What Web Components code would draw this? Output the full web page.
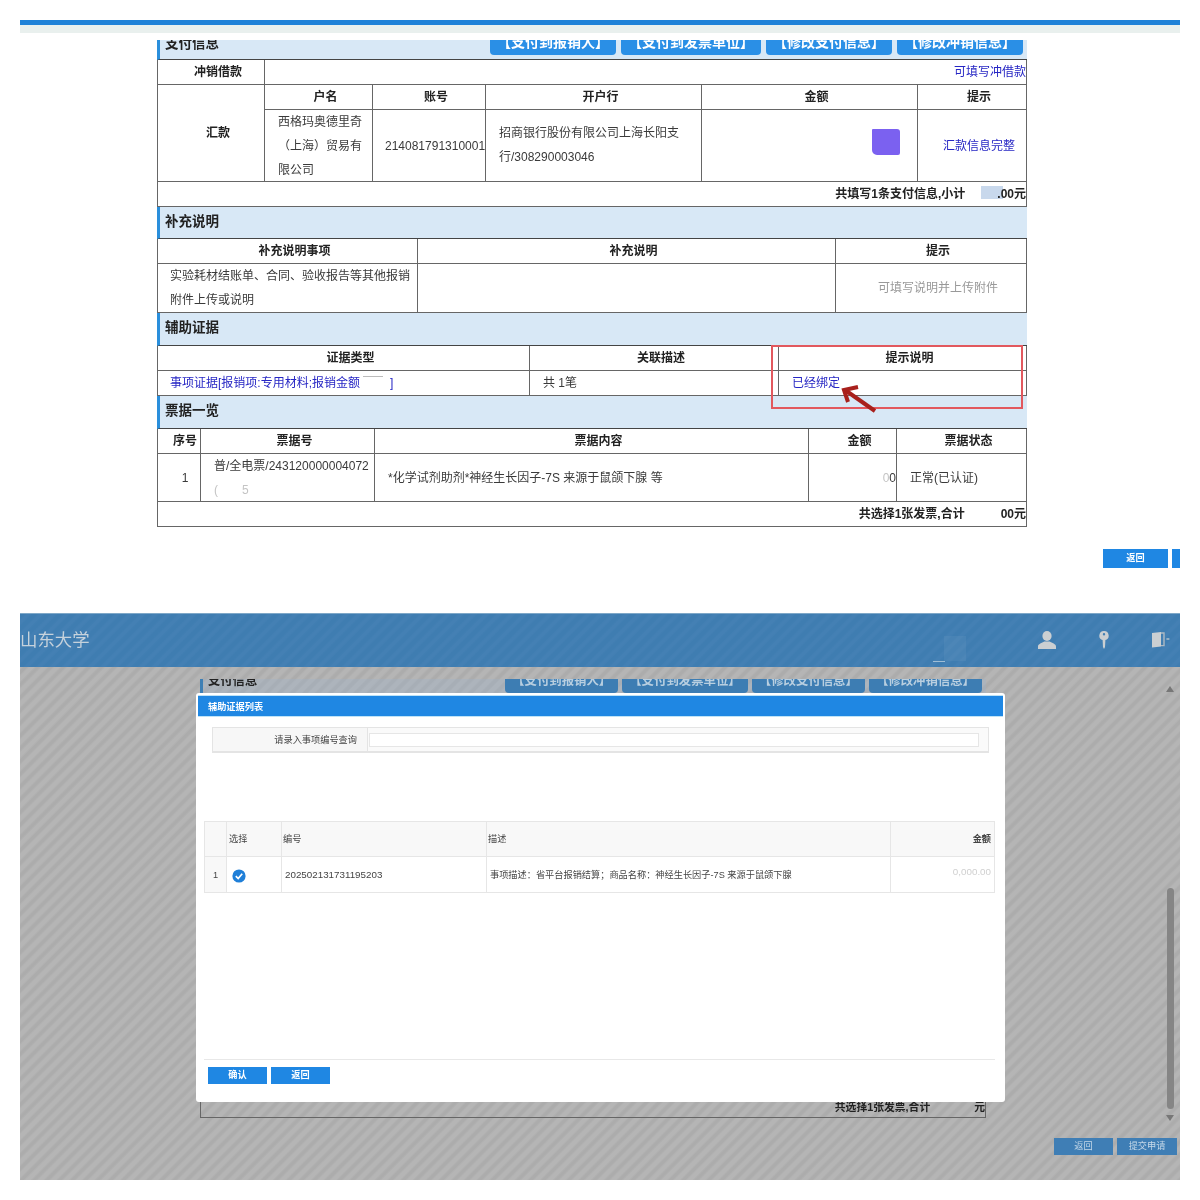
<!DOCTYPE html>
<html lang="zh-CN">
<head>
<meta charset="utf-8">
<title>辅助证据</title>
<style>
    html, body { margin: 0; background: #fff; }
    body {
        padding: 20px 20px 20px;
        font: 12px/24px "Liberation Sans", "Noto Sans CJK SC", sans-serif;
        color: #3a3a3a;
    }
</style>
</head>
<body>

<top-shot>
    <pay-form>
        <doc-section slot="head" clip="13" style="--h:33px">
            支付信息
            <tab-btn slot="tabs">【支付到报销人】</tab-btn>
            <tab-btn slot="tabs">【支付到发票单位】</tab-btn>
            <tab-btn slot="tabs">【修改支付信息】</tab-btn>
            <tab-btn slot="tabs">【修改冲销信息】</tab-btn>
        </doc-section>

        <doc-grid style="--cols:107px 108px 113px 216px 216px 109px;--rows:25px 25px 72px 25px">
            <doc-cell head>冲销借款</doc-cell>
            <doc-cell span="5" align="right" pad="0" tone="link">可填写冲借款</doc-cell>
            <doc-cell head rows="2">汇款</doc-cell>
            <doc-cell head>户名</doc-cell>
            <doc-cell head>账号</doc-cell>
            <doc-cell head>开户行</doc-cell>
            <doc-cell head>金额</doc-cell>
            <doc-cell head>提示</doc-cell>
            <doc-cell pad="0 10px 0 13px">西格玛奥德里奇（上海）贸易有限公司</doc-cell>
            <doc-cell pad="0 0 0 12px">214081791310001</doc-cell>
            <doc-cell pad="0 13px 2px">招商银行股份有限公司上海长阳支行/308290003046</doc-cell>
            <doc-cell align="right" pad="0 17px 0 0"><mask-blob kind="purple"></mask-blob></doc-cell>
            <doc-cell align="center" tone="link">汇款信息完整</doc-cell>
            <doc-cell span="6" align="right" pad="0" weight="bold">共填写1条支付信息,小计<mask-blob kind="pale"></mask-blob>.00元</doc-cell>
        </doc-grid>

        <doc-section style="--h:32px">补充说明</doc-section>
        <doc-grid style="--cols:260px 418px 191px;--rows:25px 49px">
            <doc-cell head>补充说明事项</doc-cell>
            <doc-cell head>补充说明</doc-cell>
            <doc-cell head>提示</doc-cell>
            <doc-cell pad="0 4px 0 12px">实验耗材结账单、合同、验收报告等其他报销附件上传或说明</doc-cell>
            <doc-cell></doc-cell>
            <doc-cell align="center" tone="muted">可填写说明并上传附件</doc-cell>
        </doc-grid>

        <doc-section>辅助证据</doc-section>
        <doc-grid style="--cols:372px 249px 248px;--rows:25px 25px">
            <doc-cell head>证据类型</doc-cell>
            <doc-cell head>关联描述</doc-cell>
            <doc-cell head>提示说明</doc-cell>
            <doc-cell pad="0 0 0 12px" tone="link">事项证据[报销项:专用材料;报销金额<mask-blob kind="gap"></mask-blob>]</doc-cell>
            <doc-cell pad="0 0 0 13px">共 1笔</doc-cell>
            <doc-cell pad="0 0 0 13px" tone="link">已经绑定</doc-cell>
        </doc-grid>

        <doc-section>票据一览</doc-section>
        <doc-grid style="--cols:43px 174px 434px 88px 130px;--rows:25px 48px 25px">
            <doc-cell head pad="0 2px 0 14px">序号</doc-cell>
            <doc-cell head>票据号</doc-cell>
            <doc-cell head>票据内容</doc-cell>
            <doc-cell head>金额</doc-cell>
            <doc-cell head>票据状态</doc-cell>
            <doc-cell align="center" pad="0 2px 0 14px">1</doc-cell>
            <doc-cell pad="0 0 0 13px">普/全电票/243120000004072<br><mask-blob kind="ghost">(　　5</mask-blob></doc-cell>
            <doc-cell pad="0 0 0 13px">*化学试剂助剂*神经生长因子-7S 来源于鼠颌下腺 等</doc-cell>
            <doc-cell align="right" pad="0"><mask-blob kind="ghost">0</mask-blob>0</doc-cell>
            <doc-cell pad="0 0 0 13px">正常(已认证)</doc-cell>
            <doc-cell span="5" align="right" pad="0" weight="bold">共选择1张发票,合计<mask-blob kind="blank"></mask-blob>00元</doc-cell>
        </doc-grid>
    </pay-form>
    <app-btn slot="actions" style="--w:65px;--ht:19px">返回</app-btn>
    <app-btn slot="actions" style="--w:60px;--ht:19px">提交申请</app-btn>
</top-shot>

<bottom-shot>
    <evidence-modal slot="modal"></evidence-modal>
</bottom-shot>

<script>
class TopShot extends HTMLElement {
    constructor() {
        super();
        this.shadowDOM = this.attachShadow({mode: "open"});
    }

    connectedCallback() {
        this.shadowDOM.innerHTML = `
            <style>
                :host { display: block; height: 593px; overflow: hidden; filter: blur(.35px); }
                .bar { height: 5px; background: #1f82d8; }
                .sub { height: 8px; background: #e9f0ee; }
                .form { margin: 7px 0 0 137px; }
                .actions { display: flex; gap: 4px; margin: 22px 0 0 1083px; }
            </style>
            <div class="bar"></div>
            <div class="sub"></div>
            <div class="form"><slot></slot></div>
            <div class="actions"><slot name="actions"></slot></div>`;
    }
}

class PayForm extends HTMLElement {
    constructor() {
        super();
        this.shadowDOM = this.attachShadow({mode: "open"});
    }

    connectedCallback() {
        this.shadowDOM.innerHTML = `
            <style>
                :host { display: block; position: relative; width: 870px; }
                .mark {
                    position: absolute; left: 614px; top: 305px;
                    width: 252px; height: 64px; box-sizing: border-box;
                    border: 2px solid #e2585e;
                }
                svg { position: absolute; left: 680px; top: 342px; }
            </style>
            <slot name="head"></slot>
            <slot></slot>
            <div class="mark"></div>
            <svg width="50" height="36" viewBox="0 0 50 36" fill="none" stroke="#a8201c" stroke-width="4">
                <path d="M38 29 L8 8"/>
                <path d="M21 5 L7 8 L11 20"/>
            </svg>`;
    }
}

class DocSection extends HTMLElement {
    constructor() {
        super();
        this.shadowDOM = this.attachShadow({mode: "open"});
    }

    connectedCallback() {
        const clip = this.getAttribute("clip") || 0;
        this.shadowDOM.innerHTML = `
            <style>
                :host { display: block; overflow: hidden; }
                .head {
                    display: flex; align-items: flex-start; justify-content: space-between;
                    box-sizing: border-box;
                    height: var(--h, 33px);
                    margin-top: -${clip}px;
                    padding: 0 var(--tab-end, 4px) 0 5px;
                    background: var(--sec-bg, #d8e8f6);
                    border-left: 3px solid var(--sec-mark, #2a8fdc);
                    border-bottom: 1px solid var(--sec-line, #444);
                    font-size: var(--sec-size, 13.5px);
                    font-weight: bold;
                    color: #222;
                }
                .title { line-height: calc(var(--h, 33px) - 3px); padding-top: ${clip ? 2 : 0}px; }
                .tabs { display: flex; gap: var(--tab-gap, 5px); }
            </style>
            <div class="head">
                <div class="title"><slot></slot></div>
                <div class="tabs"><slot name="tabs"></slot></div>
            </div>`;
    }
}

class TabBtn extends HTMLElement {
    constructor() {
        super();
        this.shadowDOM = this.attachShadow({mode: "open"});
    }

    connectedCallback() {
        this.shadowDOM.innerHTML = `
            <style>
                :host {
                    display: block; box-sizing: border-box;
                    height: var(--tab-h, 28px);
                    padding: 0 7px;
                    border-radius: 4px;
                    background: var(--tab-bg, #2a8fe6);
                    color: var(--tab-fg, #fff);
                    font-size: var(--tab-size, 14px);
                    line-height: 31px;
                    font-weight: bold;
                    white-space: nowrap;
                }
            </style>
            <slot></slot>`;
    }
}

class DocGrid extends HTMLElement {
    constructor() {
        super();
        this.shadowDOM = this.attachShadow({mode: "open"});
    }

    connectedCallback() {
        this.shadowDOM.innerHTML = `
            <style>
                :host {
                    display: grid;
                    grid-template-columns: var(--cols);
                    grid-template-rows: var(--rows);
                    border-left: 1px solid var(--line, #666);
                }
                :host([boxed]) { border-top: 1px solid var(--line, #666); }
            </style>
            <slot></slot>`;
    }
}

class DocCell extends HTMLElement {
    constructor() {
        super();
        this.shadowDOM = this.attachShadow({mode: "open"});
    }

    connectedCallback() {
        if (this.hasAttribute("span")) this.style.gridColumn = "span " + this.getAttribute("span");
        if (this.hasAttribute("rows")) this.style.gridRow = "span " + this.getAttribute("rows");
        const align = this.getAttribute("align") || (this.hasAttribute("head") ? "center" : "left");
        // centred cells of this form sit a little right of the middle
        const pad = this.getAttribute("pad") || (align == "center" ? "0 0 0 14px" : "0");
        this.shadowDOM.innerHTML = `
            <style>
                :host {
                    display: flex; align-items: center;
                    box-sizing: border-box; min-width: 0; overflow: hidden;
                    border-right: 1px solid var(--line, #666);
                    border-bottom: 1px solid var(--line, #666);
                }
                :host([head]) { font-weight: bold; color: #222; }
                :host([weight="bold"]) { font-weight: bold; color: #222; }
                :host([tone="link"]) { color: #2626c4; }
                :host([tone="muted"]) { color: #999; }
                :host([shade]) { background: #f8f8f8; }
                .in { flex: 1; min-width: 0; padding: ${pad}; text-align: ${align}; }
            </style>
            <div class="in"><slot></slot></div>`;
    }
}

class MaskBlob extends HTMLElement {
    constructor() {
        super();
        this.shadowDOM = this.attachShadow({mode: "open"});
    }

    connectedCallback() {
        this.shadowDOM.innerHTML = `
            <style>
                :host { display: inline-block; }
                :host([kind="purple"]) {
                    width: 28px; height: 26px; margin-bottom: 7px; vertical-align: middle;
                    background: #7b61f0; border-radius: 1px 3px 2px 5px;
                }
                :host([kind="pale"]) {
                    width: 22px; height: 13px; margin: 0 -6px 0 16px; vertical-align: -1px;
                    background: #c8d8ec;
                }
                :host([kind="gap"]) {
                    width: 20px; height: 1px; margin: 0 7px 0 3px; vertical-align: 10px;
                    background: #bbb;
                }
                :host([kind="ghost"]) { color: #c4c4c4; }
                :host([kind="blank"]) { width: 36px; }
            </style>
            <slot></slot>`;
    }
}

class AppBtn extends HTMLElement {
    constructor() {
        super();
        this.shadowDOM = this.attachShadow({mode: "open"});
    }

    connectedCallback() {
        this.shadowDOM.innerHTML = `
            <style>
                :host {
                    display: block; flex: none;
                    width: var(--w, 59px); height: var(--ht, 17px);
                    background: var(--btn-bg, #1f87e3);
                    color: var(--btn-fg, #fff);
                    font-size: 9.2px; font-weight: var(--btn-weight, bold);
                    line-height: var(--ht, 17px);
                    text-align: center;
                    white-space: nowrap;
                }
            </style>
            <slot></slot>`;
    }
}

class AppHeader extends HTMLElement {
    constructor() {
        super();
        this.shadowDOM = this.attachShadow({mode: "open"});
    }

    connectedCallback() {
        this.shadowDOM.innerHTML = `
            <style>
                :host {
                    display: flex; align-items: center; position: relative;
                    height: 54px; padding-right: 10px; box-sizing: border-box;
                    background: repeating-linear-gradient(135deg, #3f7db1 0, #3f7db1 3px, #4480b4 5px, #4480b4 7px, #3f7db1 9px);
                    border-top: 1px solid #7fa8c8;
                }
                .logo { flex: 1; font-size: 17.4px; line-height: 54px; color: #c6d2dc; margin-top: -1px; }
                .icons { display: flex; align-items: center; gap: 43px; padding-bottom: 1px; }
                svg { display: block; }
                .patch {
                    position: absolute; left: 924px; top: 22px; width: 22px; height: 25px;
                    background: rgba(255, 255, 255, .05);
                }
                .patch::after {
                    content: ""; position: absolute; left: -11px; top: 25px;
                    width: 12px; height: 1px; background: #9fbdd5;
                }
            </style>
            <div class="logo">山东大学</div>
            <div class="patch"></div>
            <div class="icons">
                <svg width="18" height="18" viewBox="0 0 18 18" fill="#cbcfd2">
                    <ellipse cx="9" cy="5" rx="4.6" ry="5"/>
                    <path d="M0 18 V15.4 C0 13 4 12.2 6.4 10.6 H11.6 C14 12.2 18 13 18 15.4 V18 Z"/>
                </svg>
                <svg width="10" height="18" viewBox="0 0 10 18" fill="#cbcfd2">
                    <path fill-rule="evenodd" d="M5 0 A4.6 4.6 0 0 1 6.4 9 L6 16 L5 18 L4 16 L3.6 9 A4.6 4.6 0 0 1 5 0 Z M5 2 A1.2 1.2 0 1 0 5 4.4 A1.2 1.2 0 1 0 5 2 Z"/>
                </svg>
                <svg width="18" height="16" viewBox="0 0 18 16">
                    <path d="M0 1 L9 0 V14.6 L0 15.6 Z" fill="#cbcfd2"/>
                    <path d="M9 1 H12 V13.6 H9" fill="none" stroke="#aeb9c2" stroke-width="1.4"/>
                    <path d="M14.4 7 H17.4" stroke="#cbcfd2" stroke-width="1.2"/>
                </svg>
            </div>`;
    }
}

class ScrollRail extends HTMLElement {
    constructor() {
        super();
        this.shadowDOM = this.attachShadow({mode: "open"});
    }

    connectedCallback() {
        this.shadowDOM.innerHTML = `
            <style>
                :host {
                    position: absolute; left: 1146px; top: 73px; width: 8px; height: 435px;
                    display: flex; flex-direction: column; align-items: center;
                }
                .up, .down { width: 0; height: 0; border: 4px solid transparent; }
                .up { border-top: 0; border-bottom: 6px solid #777; }
                .down { border-bottom: 0; border-top: 6px solid #777; margin-top: 6px; }
                .thumb { width: 7px; height: 221px; margin-top: auto; background: #858585; border-radius: 4px; }
            </style>
            <div class="up"></div>
            <div class="thumb"></div>
            <div class="down"></div>`;
    }
}

class EvidenceModal extends HTMLElement {
    constructor() {
        super();
        this.shadowDOM = this.attachShadow({mode: "open"});
    }

    connectedCallback() {
        this.shadowDOM.innerHTML = `
            <style>
                :host {
                    position: absolute; left: 176px; top: 80px;
                    width: 809px; height: 409px; box-sizing: border-box;
                    display: flex; flex-direction: column;
                    background: #fff;
                    border: 2px solid #fff;
                    border-radius: 3px;
                    font-size: 9.2px;
                    line-height: 14px;
                    color: #444;
                }
                .title {
                    height: 22px; line-height: 22px; padding-left: 10px;
                    background: #1f87e3; color: #fff; font-weight: bold;
                    border-top: 1px solid #bfe3f7; border-bottom: 1px solid #bfe3f7;
                    box-sizing: border-box;
                }
                .query {
                    display: flex; height: 26px; margin: 10px 14px 0; box-sizing: border-box;
                    border: 1px solid #e4e4e4; border-bottom-width: 2px;
                    background: #fafafa;
                }
                .query .label {
                    width: 155px; box-sizing: border-box; padding-right: 10px;
                    line-height: 24px; text-align: right; background: #f7f7f7;
                    border-right: 1px solid #e4e4e4;
                }
                .query .input { flex: 1; height: 14px; margin: 5px 9px 0 1px; background: #fff; border: 1px solid #e6e6e6; box-sizing: border-box; }
                doc-grid { margin: 68px 8px 0 6px; --cols: 22px 55px 205px 404px 104px; --rows: 35px 36px; --line: #e6e6e6; }
                .foot {
                    display: flex; gap: 4px; margin: auto 8px 0 6px;
                    padding: 7px 4px 16px;
                    border-top: 1px solid #e8e8e8;
                }
                svg { display: block; margin: 2px 0 0 5px; }
                .sn { font-size: 9.8px; }
                .amt { color: #d0d0d0; font-size: 9.8px; }
                .money { color: #444; }
            </style>
            <div class="title">辅助证据列表</div>
            <div class="query">
                <div class="label">请录入事项编号查询</div>
                <div class="input"></div>
            </div>
            <doc-grid boxed>
                <doc-cell shade></doc-cell>
                <doc-cell shade pad="0 0 0 2px">选择</doc-cell>
                <doc-cell shade pad="0 0 0 1px">编号</doc-cell>
                <doc-cell shade pad="0 0 0 1px">描述</doc-cell>
                <doc-cell shade align="right" pad="0 3px 0 0" weight="bold"><span class="money">金额</span></doc-cell>
                <doc-cell shade align="center" pad="0">1</doc-cell>
                <doc-cell>
                    <svg width="14" height="14" viewBox="0 0 14 14">
                        <circle cx="7" cy="7" r="6.6" fill="#1f7fd8"/>
                        <path d="M3.8 7.2 L6.2 9.6 L10.2 4.8" fill="none" stroke="#fff" stroke-width="1.7"/>
                    </svg>
                </doc-cell>
                <doc-cell pad="0 0 0 3px"><span class="sn">202502131731195203</span></doc-cell>
                <doc-cell pad="0 0 0 3px">事项描述：省平台报销结算；商品名称：神经生长因子-7S 来源于鼠颌下腺</doc-cell>
                <doc-cell align="right" pad="0 3px 6px 0"><span class="amt">0,000.00</span></doc-cell>
            </doc-grid>
            <div class="foot">
                <app-btn>确认</app-btn>
                <app-btn>返回</app-btn>
            </div>`;
    }
}

class BottomShot extends HTMLElement {
    constructor() {
        super();
        this.shadowDOM = this.attachShadow({mode: "open"});
    }

    connectedCallback() {
        this.shadowDOM.innerHTML = `
            <style>
                :host {
                    display: block; position: relative; height: 567px; overflow: hidden;
                    background: repeating-linear-gradient(135deg, #b5b5b5 0, #b5b5b5 3px, #acacac 5px, #acacac 7px, #b5b5b5 9px);
                    filter: blur(.35px);
                }
                .under {
                    display: flex; flex-direction: column;
                    width: 786px; height: 439px; margin: 12px 0 0 180px;
                    --line: #666;
                    --h: 30px; --sec-bg: rgba(150, 180, 210, .25); --sec-mark: #3d7fb5; --sec-line: transparent; --sec-size: 12.3px;
                    --tab-bg: #3d7db3; --tab-fg: #b9cfe0; --tab-size: 12.4px; --tab-h: 27px; --tab-gap: 4px; --tab-end: 4px;
                }
                .sum { margin-top: auto; --cols: 785px; --rows: 25px; border-top: 0; font-size: 10.8px; }
                .btns { display: flex; justify-content: flex-end; gap: 4px; padding-right: 3px; margin-top: 20px; }
                .btns app-btn { --btn-bg: #3f7eb5; --btn-fg: #c5d8e8; --btn-weight: normal; }
            </style>
            <app-header></app-header>
            <div class="under">
                <doc-section clip="13">
                    支付信息
                    <tab-btn slot="tabs">【支付到报销人】</tab-btn>
                    <tab-btn slot="tabs">【支付到发票单位】</tab-btn>
                    <tab-btn slot="tabs">【修改支付信息】</tab-btn>
                    <tab-btn slot="tabs">【修改冲销信息】</tab-btn>
                </doc-section>
                <doc-grid class="sum">
                    <doc-cell align="right" pad="3px 0 0 0" weight="bold">共选择1张发票,合计<mask-blob style="width:44px"></mask-blob>元</doc-cell>
                </doc-grid>
            </div>
            <div class="btns">
                <app-btn style="--w:59px">返回</app-btn>
                <app-btn style="--w:60px">提交申请</app-btn>
            </div>
            <scroll-rail></scroll-rail>
            <slot name="modal"></slot>`;
    }
}

customElements.define("doc-section", DocSection);
customElements.define("tab-btn", TabBtn);
customElements.define("doc-grid", DocGrid);
customElements.define("doc-cell", DocCell);
customElements.define("mask-blob", MaskBlob);
customElements.define("app-btn", AppBtn);
customElements.define("pay-form", PayForm);
customElements.define("top-shot", TopShot);
customElements.define("app-header", AppHeader);
customElements.define("scroll-rail", ScrollRail);
customElements.define("evidence-modal", EvidenceModal);
customElements.define("bottom-shot", BottomShot);
</script>
</body>
</html>
